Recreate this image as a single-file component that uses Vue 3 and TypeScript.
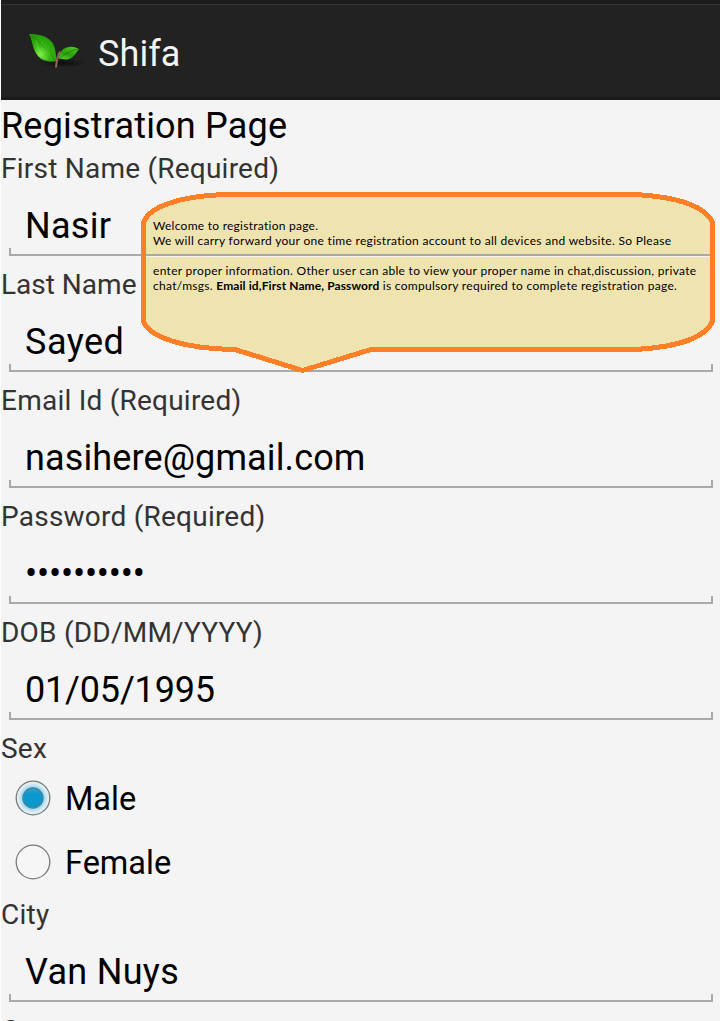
<script setup lang="ts">
interface Field {
  label: string
  value: string
  kind: string
}

const fields: Field[] = [
  { label: 'First Name (Required)', value: 'Nasir', kind: 'first' },
  { label: 'Last Name', value: 'Sayed', kind: 'last' },
  { label: 'Email Id (Required)', value: 'nasihere@gmail.com', kind: 'email' },
  { label: 'Password (Required)', value: '••••••••••', kind: 'password' },
  { label: 'DOB (DD/MM/YYYY)', value: '01/05/1995', kind: 'dob' },
]

const options = [
  { label: 'Male', checked: true },
  { label: 'Female', checked: false },
]
</script>

<template>
  <div class="screen">
    <header class="bar">
      <svg class="logo" width="64" height="48" viewBox="0 0 64 48">
        <defs>
          <radialGradient id="leafBig" cx="0.4" cy="0.75" r="0.7">
            <stop offset="0" stop-color="#7df04a" />
            <stop offset="0.5" stop-color="#36b512" />
            <stop offset="1" stop-color="#259a0a" />
          </radialGradient>
          <linearGradient id="leafSmall" x1="0" y1="1" x2="0.6" y2="0">
            <stop offset="0" stop-color="#5fd62c" />
            <stop offset="0.5" stop-color="#2a9d0b" />
            <stop offset="1" stop-color="#4cc41f" />
          </linearGradient>
          <radialGradient id="shade">
            <stop offset="0" stop-color="#000" stop-opacity="0.65" />
            <stop offset="1" stop-color="#000" stop-opacity="0" />
          </radialGradient>
        </defs>
        <ellipse cx="38" cy="35" rx="24" ry="4.500" fill="url(#shade)" />
        <path d="M4 6C14 6 22 8 27 14C31 20 31 27 31.500 33C25 34.500 17 33 13 28C7 21 8 13 4 6Z" fill="url(#leafBig)" />
        <path d="M6 8C17 15 24 23 30.500 33" fill="none" stroke="#1d7a0b" stroke-width="1" opacity="0.6" />
        <path d="M11 12C12 20 16 27 23 31M16 14C20 18 23 22 25 27" fill="none" stroke="#9bf56c" stroke-width="0.8" opacity="0.35" />
        <path d="M34 31C34 24 38 19 45 19C48 18.500 50 19.500 54 21C50 26 48 31 42 31.500C39 31.500 37 30 34 31Z" fill="url(#leafSmall)" />
        <path d="M34 31C39 26 45 23 53 21" fill="none" stroke="#1b7309" stroke-width="1" opacity="0.7" />
        <path d="M35 23.500C32 29 31.500 33 31 39.500" fill="none" stroke="#8f6b54" stroke-width="2" />
      </svg>
      <span class="title">Shifa</span>
    </header>

    <main class="form">
      <h1 class="heading"><span>Registration Page</span></h1>

      <section v-for="f in fields" :key="f.kind" class="field">
        <div class="label" :class="'l-' + f.kind">{{ f.label }}</div>
        <div class="input" :class="'v-' + f.kind">{{ f.value }}</div>
      </section>

      <div class="label">Sex</div>
      <div class="radios">
        <div v-for="o in options" :key="o.label" class="radio">
          <svg width="38" height="38" viewBox="0 0 38 38">
            <defs>
              <radialGradient id="glow">
                <stop offset="0.58" stop-color="#8fd0ea" />
                <stop offset="0.85" stop-color="#d9edf5" />
                <stop offset="1" stop-color="#eaf3f6" />
              </radialGradient>
              <linearGradient id="dot" x1="0" y1="0" x2="0" y2="1">
                <stop offset="0" stop-color="#2ba6d4" />
                <stop offset="0.3" stop-color="#0a99cf" />
                <stop offset="1" stop-color="#0a97cc" />
              </linearGradient>
            </defs>
            <circle cx="19" cy="19" r="16.800" :fill="o.checked ? 'url(#glow)' : '#f6f6f6'" stroke="#7a7a7a" stroke-width="1.300" />
            <circle v-if="o.checked" cx="19" cy="19" r="10" fill="url(#dot)" stroke="#4a8299" stroke-width="1.400" />
          </svg>
          <span>{{ o.label }}</span>
        </div>
      </div>

      <section class="field">
        <div class="label">City</div>
        <div class="input v-city">Van Nuys</div>
      </section>
      <div class="label">Country</div>
    </main>

    <aside class="bubble">
      <svg class="shape" width="580" height="190" viewBox="0 0 580 190" shape-rendering="crispEdges">
        <path
          d="M85 9.500H496C540 12 568 22 573.500 38V136C567 152 540 162 496 164.500H232L163.500 185.500L96 164.500C46 164 9 152 4.500 136V38C9 22 41 11 85 9.500Z"
          fill="#efe4b0" stroke="#ff7f27" stroke-width="5" stroke-linejoin="round"
        />
        <rect x="7" y="69" width="564" height="2" fill="#a9a9a9" />
        <rect x="7" y="71" width="564" height="1" fill="#f4f4f4" />
      </svg>
      <div class="note">
        <p class="n1">Welcome to registration page.</p>
        <p class="n2">We will carry forward your one time registration account to all devices and website. So Please</p>
        <p class="n3">enter proper information. Other user can able to view your proper name in chat,discussion, private</p>
        <p class="n4">chat/msgs. <b>Email id,First Name, Password</b> is compulsory required to complete registration page.</p>
      </div>
    </aside>
  </div>
</template>

<style>
body {
  background: #fff;
  overflow: hidden;
}
</style>

<style scoped>
.screen {
  position: relative;
  box-sizing: border-box;
  width: 720px;
  height: 1021px;
  padding-left: 1px;
  overflow: hidden;
  background: #fff;
  font-family: Roboto, "Liberation Sans", sans-serif;
  color: #000;
}
.bar {
  box-sizing: border-box;
  height: 100px;
  display: flex;
  align-items: center;
  padding: 4px 0 0 24px;
  background: #222;
  border-bottom: 3px solid #1a1a1a;
  box-shadow: inset 0 4px #1c1c1c, inset 0 5px #343434;
}
.logo {
  flex: none;
  margin-top: 3px;
}
.title {
  margin: 6px 0 0 9px;
  font-size: 36px;
  letter-spacing: 0.1px;
  color: #f3f3f3;
}
.form {
  height: 921px;
  background: #f4f4f4;
}
.heading {
  margin: 0;
  height: 52px;
  line-height: 53px;
  font-size: 36px;
  font-weight: 400;
  letter-spacing: 0.19px;
}
.label {
  height: 33px;
  line-height: 33px;
  font-size: 28px;
  letter-spacing: 0.23px;
  color: #333;
  white-space: nowrap;
}
.l-last {
  letter-spacing: 0;
}
.field {
  height: 116px;
}
.input {
  position: relative;
  box-sizing: border-box;
  height: 71px;
  margin: 0 7px 0 8px;
  padding: 11px 0 0 16px;
  line-height: 61px;
  font-size: 36px;
  letter-spacing: 0.3px;
  white-space: nowrap;
}
.v-last {
  letter-spacing: 0.5px;
}
.v-email {
  letter-spacing: 0.12px;
}
.v-password,
.v-dob {
  letter-spacing: -0.17px;
}
.input::after {
  content: "";
  position: absolute;
  left: 0;
  right: 0;
  bottom: 0;
  height: 6px;
  border: solid #a9a9a9;
  border-width: 0 2px 2px;
}
.radios {
  padding: 1px 0 4px;
}
.radio {
  display: flex;
  align-items: center;
  gap: 13px;
  height: 64px;
  padding-left: 13px;
  font-size: 32.5px;
  letter-spacing: 0;
}
.radio span {
  padding-top: 2px;
}
.bubble {
  position: absolute;
  left: 139px;
  top: 185px;
  width: 580px;
  height: 190px;
}
.shape {
  position: absolute;
  left: 0;
  top: 0;
}
.note {
  position: relative;
  padding: 33px 0 0 14px;
  font: 12px/15px Lato, "Open Sans", sans-serif;
  letter-spacing: 0.305px;
  white-space: nowrap;
}
.note p {
  margin: 0;
}
.note .n1 {
  letter-spacing: 0.26px;
}
.note .n3 {
  margin-top: 15px;
}
.note .n4 {
  letter-spacing: 0.29px;
}
.note b {
  letter-spacing: 0.1px;
}
</style>
